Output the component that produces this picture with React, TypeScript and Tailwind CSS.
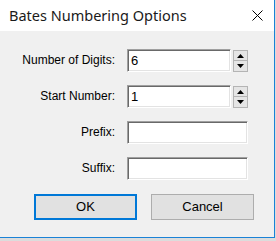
import React from 'react';

const inputCls =
  'h-[23px] bg-white border border-t-[#a0a0a0] border-l-[#a0a0a0] border-r-white border-b-white shadow-[inset_1px_1px_0_#696969,inset_-1px_-1px_0_#e3e3e3] px-[3px] text-[13px] leading-[21px] text-black';

const Spinner: React.FC = () => (
  <div className="ml-[2px] flex flex-col w-[15px] h-[22px] mt-[1px]">
    <div className="h-[11px] bg-[#e5e5e5] border border-[#b4b4b4] flex items-center justify-center">
      <svg width="7" height="4" viewBox="0 0 7 4">
        <polygon points="3.5,0 7,4 0,4" fill="#000" />
      </svg>
    </div>
    <div className="h-[11px] bg-[#e5e5e5] border border-t-0 border-[#b4b4b4] flex items-center justify-center">
      <svg width="7" height="4" viewBox="0 0 7 4">
        <polygon points="0,0 7,0 3.5,4" fill="#000" />
      </svg>
    </div>
  </div>
);

const Row: React.FC<{ label: string; value?: string; spin?: boolean }> = ({ label, value, spin }) => (
  <div className="flex items-start h-[23px]">
    <div className="w-[115px] text-right text-[12px] leading-[23px] text-black">{label}</div>
    <div className="ml-[12px] flex items-start">
      <div className={`${inputCls} ${spin ? 'w-[104px]' : 'w-[121px]'}`}>{value}</div>
      {spin && <Spinner />}
    </div>
  </div>
);

const App: React.FC = () => {
  return (
    <div className="w-[276px] h-[241px] bg-[#dcdcdc] font-['Liberation_Sans',Arial,sans-serif]">
      <div className="w-[275px] h-[238px] bg-[#f0f0f0] border-r border-b border-[#1a82d6] flex flex-col">
        {/* Title bar */}
        <div className="h-[31px] bg-white flex items-center justify-between pl-[9px] pr-[10px]">
          <span className="font-['Noto_Sans',sans-serif] text-[14.5px] text-[#1a1a1a] leading-none">Bates Numbering Options</span>
          <svg width="11" height="11" viewBox="0 0 11 11" className="mr-[1px]">
            <path d="M0.5 0.5 L10.5 10.5 M10.5 0.5 L0.5 10.5" stroke="#000" strokeWidth="1" />
          </svg>
        </div>

        {/* Fields */}
        <div className="pt-[18px] flex flex-col gap-[13px]">
          <Row label="Number of Digits:" value="6" spin />
          <Row label="Start Number:" value="1" spin />
          <Row label="Prefix:" />
          <Row label="Suffix:" />
        </div>

        {/* Buttons */}
        <div className="mt-[14px] flex gap-[14px] pl-[34px]">
          <button className="w-[103px] h-[26px] bg-[#e1e1e1] border-2 border-[#0078d7] text-[13px] text-black">
            OK
          </button>
          <button className="w-[103px] h-[26px] bg-[#e1e1e1] border border-[#adadad] text-[13px] text-black">
            Cancel
          </button>
        </div>
      </div>
    </div>
  );
};

export default App;
